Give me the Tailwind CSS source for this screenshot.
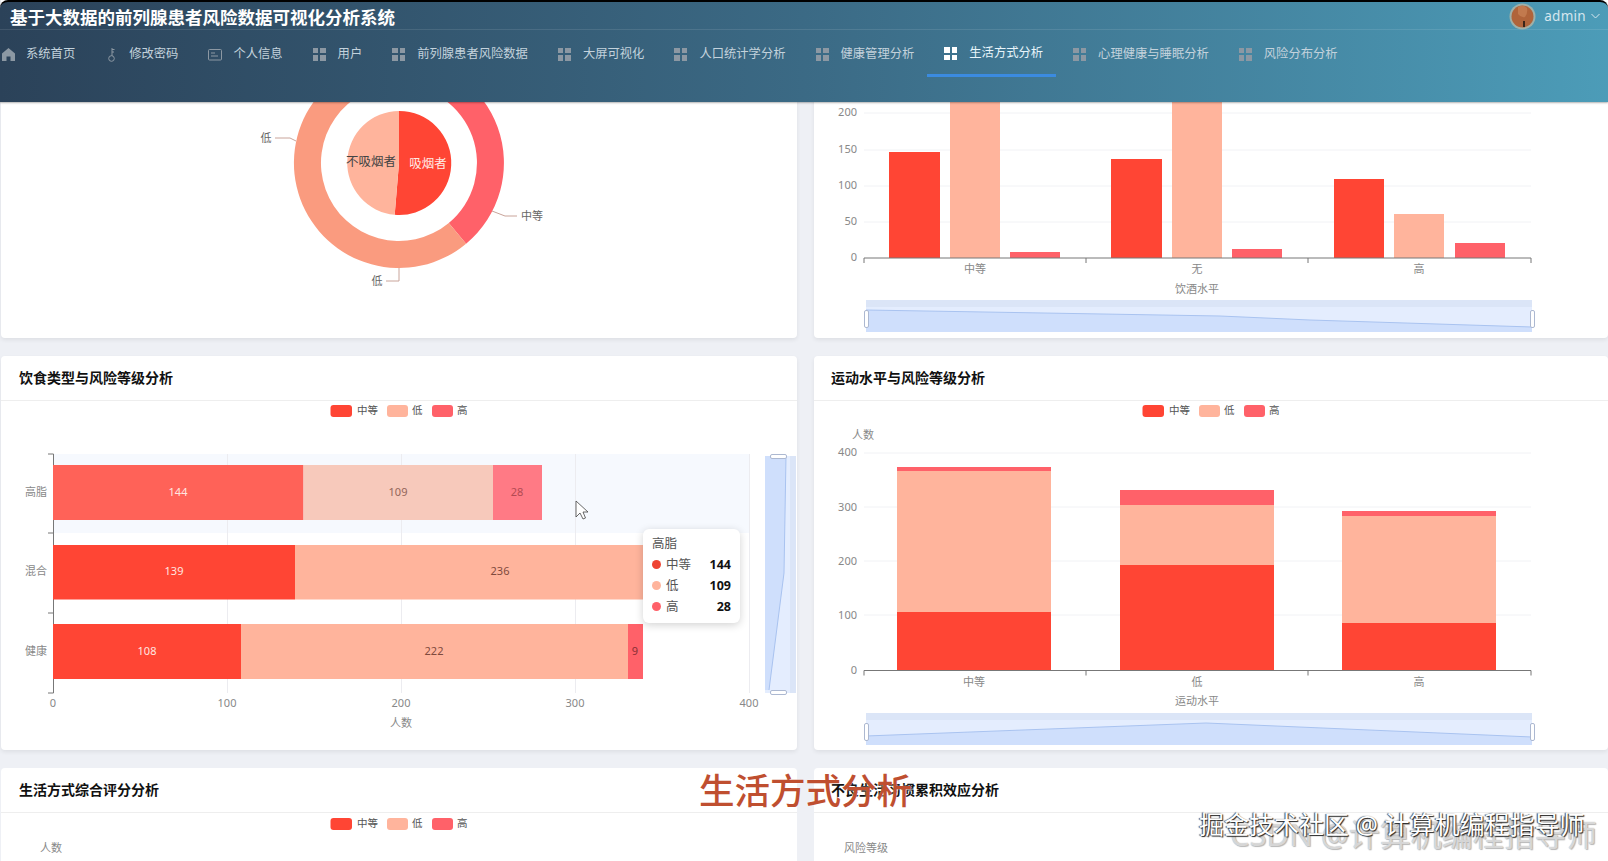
<!DOCTYPE html>
<html lang="zh">
<head>
    <meta charset="UTF-8">
    <title>基于大数据的前列腺患者风险数据可视化分析系统</title>
    <script src="https://cdn.jsdelivr.net/npm/@tailwindcss/browser@4"></script>
</head>
<body class="relative h-screen overflow-hidden bg-[#eef0f5] font-['Noto_Sans','Noto_Sans_CJK_SC',sans-serif]">

    <!-- top bar -->
    <header class="absolute top-0 left-0 z-10 w-full h-[102px] border-t-2 border-black rounded-t-lg bg-gradient-to-r from-[#2b4259] via-[#3b6a85] to-[#4c9cb8] shadow-[0_1px_2px_rgba(0,0,0,.3)]">
        <div class="flex items-center justify-between h-[28px] border-b border-white/10">
            <h1 class="pl-[10px] pt-[2px] text-[17.5px] leading-[30px] font-bold text-white">基于大数据的前列腺患者风险数据可视化分析系统</h1>
            <div class="flex items-center pr-[8px] pt-[1px] text-[#d6e6ee]">
                <svg class="w-[27px] h-[27px] ml-[2px]" viewBox="0 0 27 27">
                    <circle cx="13.5" cy="13.5" r="13" fill="#9fb0a8"/>
                    <circle cx="13.5" cy="13.5" r="11" fill="#b0643a"/>
                    <path d="M9 4q5-3 9 1q1 5-2 9q-4 1-7-3z" fill="#c27a4e"/>
                    <path d="M14 18h2v6h-2z" fill="#3a2418"/>
                </svg>
                <span class="ml-[8px] text-[13.5px] tracking-[.3px]">admin</span>
                <svg class="ml-[5px] w-[9px] h-[6px]" viewBox="0 0 9 6" fill="none" stroke="currentColor"><path d="M.5 1l4 4 4-4"/></svg>
            </div>
        </div>
        <nav class="flex -ml-[15px] mt-[2px] text-[12.3px] text-[#c3d2dc]">
            <a class="flex items-center h-[45px] pt-[1px] pl-[17px] pr-[13px] border-b-2 border-transparent">
                <svg class="w-[13px] h-[13px] mr-[11px]" viewBox="0 0 13 13" fill="#8c98a3"><path d="M6.5 0L13 5.5V13H8.5V8.5h-4V13H0V5.5z"/></svg>系统首页</a>
            <a class="flex items-center h-[45px] pt-[1px] pl-[17px] pr-[13px] border-b-2 border-transparent">
                <svg class="w-[13px] h-[15px] mr-[11px]" viewBox="0 0 13 15" fill="none" stroke="#8c98a3"><path d="M7 1v8M7 2.5h2.500M7 5h2"/><circle cx="6.5" cy="11.5" r="2.8"/></svg>修改密码</a>
            <a class="flex items-center h-[45px] pt-[1px] pl-[17px] pr-[13px] border-b-2 border-transparent">
                <svg class="w-[14px] h-[13px] mr-[11px]" viewBox="0 0 14 13" fill="none" stroke="#8c98a3"><rect x=".5" y="1.5" width="13" height="10.5" rx="1"/><path d="M3 5h4M3 8h7"/></svg>个人信息</a>
            <a class="flex items-center h-[45px] pt-[1px] pl-[17px] pr-[13px] border-b-2 border-transparent">
                <span class="grid grid-cols-2 gap-[2px] w-[13px] h-[13px] mr-[12px]"><i class="bg-[#8c98a3]"></i><i class="bg-[#8c98a3]"></i><i class="bg-[#8c98a3]"></i><i class="bg-[#8c98a3]"></i></span>用户</a>
            <a class="flex items-center h-[45px] pt-[1px] pl-[17px] pr-[13px] border-b-2 border-transparent">
                <span class="grid grid-cols-2 gap-[2px] w-[13px] h-[13px] mr-[12px]"><i class="bg-[#8c98a3]"></i><i class="bg-[#8c98a3]"></i><i class="bg-[#8c98a3]"></i><i class="bg-[#8c98a3]"></i></span>前列腺患者风险数据</a>
            <a class="flex items-center h-[45px] pt-[1px] pl-[17px] pr-[13px] border-b-2 border-transparent">
                <span class="grid grid-cols-2 gap-[2px] w-[13px] h-[13px] mr-[12px]"><i class="bg-[#8c98a3]"></i><i class="bg-[#8c98a3]"></i><i class="bg-[#8c98a3]"></i><i class="bg-[#8c98a3]"></i></span>大屏可视化</a>
            <a class="flex items-center h-[45px] pt-[1px] pl-[17px] pr-[13px] border-b-2 border-transparent">
                <span class="grid grid-cols-2 gap-[2px] w-[13px] h-[13px] mr-[12px]"><i class="bg-[#8c98a3]"></i><i class="bg-[#8c98a3]"></i><i class="bg-[#8c98a3]"></i><i class="bg-[#8c98a3]"></i></span>人口统计学分析</a>
            <a class="flex items-center h-[45px] pt-[1px] pl-[17px] pr-[13px] border-b-2 border-transparent">
                <span class="grid grid-cols-2 gap-[2px] w-[13px] h-[13px] mr-[12px]"><i class="bg-[#8c98a3]"></i><i class="bg-[#8c98a3]"></i><i class="bg-[#8c98a3]"></i><i class="bg-[#8c98a3]"></i></span>健康管理分析</a>
            <a class="flex items-center h-[45px] pt-[1px] pl-[17px] pr-[13px] border-b-[3px] border-[#3b8be0] text-[#e8f5fb]">
                <span class="grid grid-cols-2 gap-[2px] w-[13px] h-[13px] mr-[12px]"><i class="bg-white"></i><i class="bg-white"></i><i class="bg-white"></i><i class="bg-white"></i></span>生活方式分析</a>
            <a class="flex items-center h-[45px] pt-[1px] pl-[17px] pr-[13px] border-b-2 border-transparent">
                <span class="grid grid-cols-2 gap-[2px] w-[13px] h-[13px] mr-[12px]"><i class="bg-[#8c98a3]"></i><i class="bg-[#8c98a3]"></i><i class="bg-[#8c98a3]"></i><i class="bg-[#8c98a3]"></i></span>心理健康与睡眠分析</a>
            <a class="flex items-center h-[45px] pt-[1px] pl-[17px] pr-[13px] border-b-2 border-transparent">
                <span class="grid grid-cols-2 gap-[2px] w-[13px] h-[13px] mr-[12px]"><i class="bg-[#8c98a3]"></i><i class="bg-[#8c98a3]"></i><i class="bg-[#8c98a3]"></i><i class="bg-[#8c98a3]"></i></span>风险分布分析</a>
        </nav>
    </header>

    <!-- page is scrolled, first row runs under the bar -->
    <main class="grid grid-cols-[796px_794px] grid-rows-[394px_394px_394px] gap-x-[17px] gap-y-[18px] pl-[1px] -mt-[56px]">

        <section class="bg-white rounded-sm shadow-[0_2px_4px_rgba(0,0,0,.07)]">
            <svg class="block" width="796" height="394" viewBox="1 -56 796 394" font-size="11" text-anchor="middle" dominant-baseline="central">
                <path d="M399 58A105 105 0 0 1 466.1 243.7L448.8 223A78 78 0 0 0 399 85Z" fill="#ff6169"/>
                <path d="M466.1 243.7A105 105 0 1 1 399 58L399 85A78 78 0 1 0 448.8 223Z" fill="#fa9b7f"/>
                <path d="M399 163L399 111A52 52 0 1 1 394.7 214.8Z" fill="#ff4534"/>
                <path d="M399 163L394.7 214.8A52 52 0 0 1 399 111Z" fill="#ffb49c"/>
                <text x="371" y="161" font-size="12.5" fill="#444">不吸烟者</text>
                <text x="428" y="163" font-size="12.5" fill="#ffe9e4">吸烟者</text>
                <g fill="none" stroke="#c9a49a"><path d="M275 138H290L296 141"/><path d="M386 281H399V268"/><path d="M517 216H505L492 211"/></g>
                <g fill="#666"><text x="266" y="137">低</text><text x="377" y="280">低</text><text x="532" y="215">中等</text></g>
            </svg>
        </section>

        <section class="bg-white rounded-sm shadow-[0_2px_4px_rgba(0,0,0,.07)]">
            <svg class="block" width="794" height="394" viewBox="814 -56 794 394" font-size="11" fill="#888">
                <g stroke="#f1f2f5"><path d="M864 113H1531M864 150H1531M864 186H1531M864 222H1531"/></g>
                <g fill="#ff4534"><rect x="889" y="152" width="51" height="106"/><rect x="1111" y="159" width="51" height="99"/><rect x="1334" y="179" width="50" height="79"/></g>
                <g fill="#ffb49c"><rect x="950" y="80" width="50" height="178"/><rect x="1172" y="80" width="50" height="178"/><rect x="1394" y="214" width="50" height="44"/></g>
                <g fill="#ff6169"><rect x="1010" y="252" width="50" height="6"/><rect x="1232" y="249" width="50" height="9"/><rect x="1455" y="243" width="50" height="15"/></g>
                <path d="M864 263V258H1531V263M1086 258V263M1308 258V263" fill="none" stroke="#777"/>
                <g text-anchor="end" dominant-baseline="central"><text x="857" y="111">200</text><text x="857" y="148">150</text><text x="857" y="184">100</text><text x="857" y="220">50</text><text x="857" y="256">0</text></g>
                <g text-anchor="middle" dominant-baseline="central"><text x="975" y="268">中等</text><text x="1197" y="268">无</text><text x="1419" y="268">高</text><text x="1197" y="288">饮酒水平</text></g>
                <rect x="866" y="300" width="666" height="32" fill="#e4edfe"/>
                <rect x="866" y="300" width="666" height="7" fill="#dbe5f7"/>
                <path d="M866 310L1220 316L1310 320L1532 327V332H866Z" fill="#cfdffc"/>
                <path d="M866 310L1220 316L1310 320L1532 327" fill="none" stroke="#a9c3f0"/>
                <g fill="#fff" stroke="#acb8d1"><rect x="864.5" y="310.5" width="4" height="17" rx="1.5"/><rect x="1530.5" y="310.5" width="4" height="17" rx="1.5"/></g>
            </svg>
        </section>

        <section class="bg-white rounded-sm shadow-[0_2px_4px_rgba(0,0,0,.07)]">
            <h2 class="flex items-center h-[45px] pl-[18px] pb-[1px] border-b border-[#eeeeee] text-[14px] font-bold text-[#111]">饮食类型与风险等级分析</h2>
            <svg class="block" width="796" height="349" viewBox="1 401 796 349" font-size="11" fill="#888" dominant-baseline="central">
                <g><rect x="330.5" y="405" width="21.5" height="12" rx="3" fill="#ff4534"/><rect x="387" y="405" width="21" height="12" rx="3" fill="#ffb49c"/><rect x="432" y="405" width="21" height="12" rx="3" fill="#ff6169"/>
                <text x="357" y="410" font-size="10.5" fill="#555">中等</text><text x="412" y="410" font-size="10.5" fill="#555">低</text><text x="457" y="410" font-size="10.5" fill="#555">高</text></g>
                <rect x="53" y="454" width="696" height="79" fill="#f6f9fe"/>
                <path d="M227.5 454V693M401.5 454V693M575.5 454V693M749.5 454V693" stroke="#ececf0"/>
                <path d="M48 454H53.5V693H48M48 533H53M48 613H53" fill="none" stroke="#777"/>
                <rect x="53" y="465" width="250.5" height="55" fill="#ff6258"/><rect x="303.5" y="465" width="189.5" height="55" fill="#f7c9bb"/><rect x="493" y="465" width="49" height="55" fill="#ff7a85"/>
                <rect x="53" y="545" width="242" height="54.5" fill="#ff4534"/><rect x="295" y="545" width="411" height="54.5" fill="#ffb49c"/>
                <rect x="53" y="624" width="188" height="55" fill="#ff4534"/><rect x="241" y="624" width="387" height="55" fill="#ffb49c"/><rect x="628" y="624" width="15" height="55" fill="#ff6169"/>
                <g text-anchor="middle">
                    <text x="178" y="491" fill="#ffe6e0">144</text><text x="398" y="491" fill="#93655a">109</text><text x="517" y="491" fill="#b34a53">28</text>
                    <text x="174" y="570" fill="#ffe6e0">139</text><text x="500" y="570" fill="#7f4a3c">236</text>
                    <text x="147" y="650" fill="#ffe6e0">108</text><text x="434" y="650" fill="#7f4a3c">222</text><text x="635" y="650" fill="#8a2f36">9</text>
                    <text x="36" y="491">高脂</text><text x="36" y="570">混合</text><text x="36" y="650">健康</text>
                    <text x="53" y="702">0</text><text x="227" y="702">100</text><text x="401" y="702">200</text><text x="575" y="702">300</text><text x="749" y="702">400</text>
                    <text x="401" y="722">人数</text>
                </g>
                <path d="M576 501V517L580 513L583 519L585.5 518L583 512H588Z" fill="#fff" stroke="#444" stroke-width=".8"/>
                <rect x="765" y="456" width="31" height="237" fill="#e4edfe"/>
                <rect x="790" y="456" width="6" height="237" fill="#dbe5f7"/>
                <path d="M765 456H786L784 573L769 690H765Z" fill="#cfdffc"/>
                <path d="M786 456L784 573L769 690" fill="none" stroke="#a9c3f0"/>
                <g fill="#fff" stroke="#acb8d1"><rect x="770.5" y="454.5" width="16" height="4" rx="1.5"/><rect x="770.5" y="690.5" width="16" height="4" rx="1.5"/></g>
            </svg>
        </section>

        <section class="bg-white rounded-sm shadow-[0_2px_4px_rgba(0,0,0,.07)]">
            <h2 class="flex items-center h-[45px] pl-[17px] pb-[1px] border-b border-[#eeeeee] text-[14px] font-bold text-[#111]">运动水平与风险等级分析</h2>
            <svg class="block" width="794" height="349" viewBox="814 401 794 349" font-size="11" fill="#888" dominant-baseline="central">
                <g><rect x="1142.5" y="405" width="21.5" height="12" rx="3" fill="#ff4534"/><rect x="1199" y="405" width="21" height="12" rx="3" fill="#ffb49c"/><rect x="1244" y="405" width="21" height="12" rx="3" fill="#ff6169"/>
                <text x="1169" y="410" font-size="10.5" fill="#555">中等</text><text x="1224" y="410" font-size="10.5" fill="#555">低</text><text x="1269" y="410" font-size="10.5" fill="#555">高</text></g>
                <path d="M864 453H1531M864 507H1531M864 561H1531M864 615H1531" stroke="#f1f2f5"/>
                <rect x="897" y="612" width="154" height="58.5" fill="#ff4534"/><rect x="897" y="471" width="154" height="141" fill="#ffb49c"/><rect x="897" y="467" width="154" height="4" fill="#ff6169"/>
                <rect x="1120" y="565" width="154" height="105.5" fill="#ff4534"/><rect x="1120" y="505" width="154" height="60" fill="#ffb49c"/><rect x="1120" y="490" width="154" height="15" fill="#ff6169"/>
                <rect x="1342" y="623" width="154" height="47.5" fill="#ff4534"/><rect x="1342" y="516" width="154" height="107" fill="#ffb49c"/><rect x="1342" y="511" width="154" height="5" fill="#ff6169"/>
                <path d="M864 675.5V670.5H1531V675.5M1086 670.5V675.5M1308 670.5V675.5" fill="none" stroke="#777"/>
                <text x="863" y="434" text-anchor="middle">人数</text>
                <g text-anchor="end"><text x="857" y="451">400</text><text x="857" y="506">300</text><text x="857" y="560">200</text><text x="857" y="614">100</text><text x="857" y="669">0</text></g>
                <g text-anchor="middle"><text x="974" y="681">中等</text><text x="1197" y="681">低</text><text x="1419" y="681">高</text><text x="1197" y="700">运动水平</text></g>
                <rect x="866" y="713" width="666" height="32" fill="#e4edfe"/>
                <rect x="866" y="713" width="666" height="7" fill="#dbe5f7"/>
                <path d="M866 736L1206 723L1532 737V745H866Z" fill="#cfdffc"/>
                <path d="M866 736L1206 723L1532 737" fill="none" stroke="#a9c3f0"/>
                <g fill="#fff" stroke="#acb8d1"><rect x="864.5" y="723.5" width="4" height="17" rx="1.5"/><rect x="1530.5" y="723.5" width="4" height="17" rx="1.5"/></g>
            </svg>
        </section>

        <section class="bg-white rounded-sm">
            <h2 class="flex items-center h-[45px] pl-[18px] pb-[1px] border-b border-[#eeeeee] text-[14px] font-bold text-[#111]">生活方式综合评分分析</h2>
            <svg class="block" width="796" height="60" viewBox="1 813 796 60" font-size="11" fill="#888" dominant-baseline="central">
                <rect x="330.5" y="818" width="21.5" height="12" rx="3" fill="#ff4534"/><rect x="387" y="818" width="21" height="12" rx="3" fill="#ffb49c"/><rect x="432" y="818" width="21" height="12" rx="3" fill="#ff6169"/>
                <text x="357" y="823" font-size="10.5" fill="#555">中等</text><text x="412" y="823" font-size="10.5" fill="#555">低</text><text x="457" y="823" font-size="10.5" fill="#555">高</text>
                <text x="51" y="847" text-anchor="middle">人数</text>
            </svg>
        </section>

        <section class="bg-white rounded-sm">
            <h2 class="flex items-center h-[45px] pl-[17px] pb-[1px] border-b border-[#eeeeee] text-[14px] font-bold text-[#111]">不良生活习惯累积效应分析</h2>
            <svg class="block" width="794" height="60" viewBox="814 813 794 60" font-size="11" fill="#888" dominant-baseline="central">
                <text x="866" y="847" text-anchor="middle">风险等级</text>
            </svg>
        </section>
    </main>

    <!-- tooltip over the chart -->
    <div class="absolute z-[5] left-[643px] top-[529px] w-[97px] h-[94px] px-[9px] pt-[4px] bg-white rounded-md shadow-[0_2px_8px_rgba(0,0,0,.18)] text-[12.5px] text-[#555]">
        <div class="leading-[21px]">高脂</div>
        <div class="flex items-center leading-[21px]"><i class="w-[9px] h-[9px] mr-[5px] rounded-full bg-[#ee4433]"></i>中等<b class="ml-auto text-[#111]">144</b></div>
        <div class="flex items-center leading-[21px]"><i class="w-[9px] h-[9px] mr-[5px] rounded-full bg-[#ffb49c]"></i>低<b class="ml-auto text-[#111]">109</b></div>
        <div class="flex items-center leading-[21px]"><i class="w-[9px] h-[9px] mr-[5px] rounded-full bg-[#ff6169]"></i>高<b class="ml-auto text-[#111]">28</b></div>
    </div>

    <!-- video caption and watermarks -->
    <div class="absolute z-20 left-[699px] top-[765px] text-[35.5px] leading-[50px] font-medium text-[#bf4f30] [text-shadow:0_0_2px_rgba(255,255,255,.8)]">生活方式分析</div>
    <div class="absolute z-20 left-[1230px] top-[814px] text-[31px] leading-[40px] whitespace-nowrap text-white/60 [text-shadow:0_0_1px_#999,1px_1px_1px_#bbb]">CSDN @计算机编程指导师</div>
    <div class="absolute z-20 left-[1199px] top-[808px] text-[25px] leading-[32px] whitespace-nowrap text-white [text-shadow:1px_1px_1px_#222,-1px_0_1px_#444]">掘金技术社区 @ 计算机编程指导师</div>
</body>
</html>
